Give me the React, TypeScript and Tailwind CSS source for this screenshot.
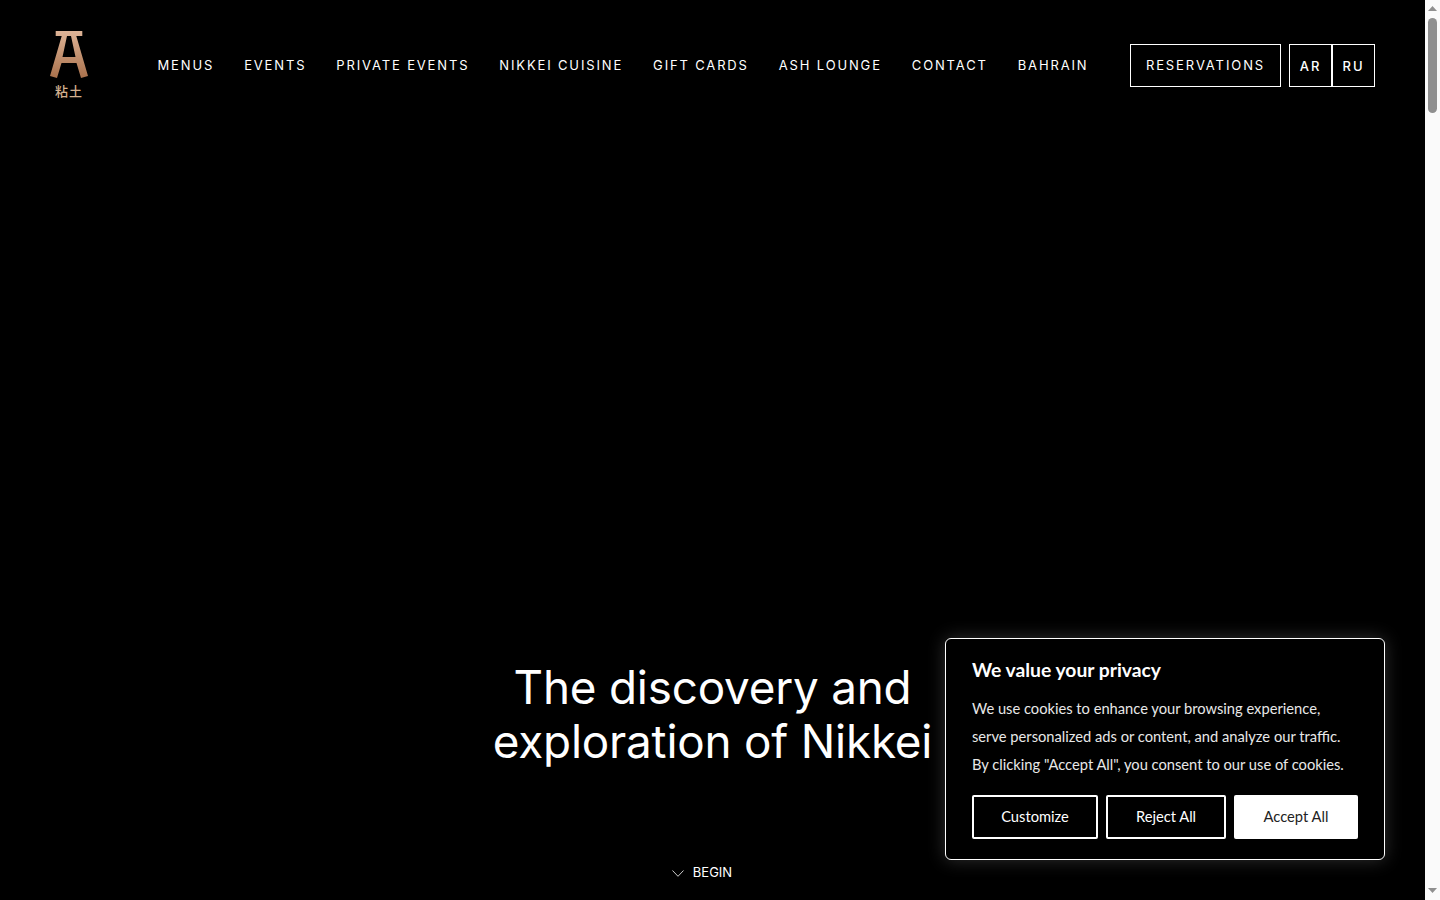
const navItems = [
  "MENUS",
  "EVENTS",
  "PRIVATE EVENTS",
  "NIKKEI CUISINE",
  "GIFT CARDS",
  "ASH LOUNGE",
  "CONTACT",
  "BAHRAIN",
];

const sans = "font-['Inter','Liberation_Sans',sans-serif]";
const body = "font-['Lato','Liberation_Sans',sans-serif]";

function Logo() {
  return (
    <div className="flex w-[38px] flex-col items-center">
      <svg width="38" height="48" viewBox="0 0 38 48" aria-hidden>
        <defs>
          <linearGradient id="clay" x1="0" y1="0" x2="0" y2="1">
            <stop offset="0" stopColor="#deb497" />
            <stop offset="1" stopColor="#a9714c" />
          </linearGradient>
        </defs>
        <path
          fill="url(#clay)"
          fillRule="evenodd"
          d="M5.700 0H32.300V5H26.300L38 45L31 47L26.500 32H11.500L7 47L0 45L11.700 5H5.700ZM17 5L12.500 26H25.500L21 5Z"
        />
      </svg>
      <span className="mt-1 whitespace-nowrap font-['Noto_Sans_CJK_JP',sans-serif] text-[13px] font-medium leading-[16px] tracking-[1px] text-[#d3b08f]">
        粘土
      </span>
    </div>
  );
}

function Header() {
  return (
    <header className={`flex h-[130px] items-start pl-[50px] pr-[50px] pt-[31px] text-white ${sans}`}>
      <Logo />
      <nav className="ml-[69.500px] mt-[13px] flex h-[43px] items-center gap-[30px] text-[13px] tracking-[1.850px]">
        {navItems.map((item) => (
          <a key={item} className="whitespace-nowrap">
            {item}
          </a>
        ))}
      </nav>
      <div className="ml-auto mt-[13px] flex">
        <a className="mr-2 flex h-[43px] w-[151px] items-center justify-center border border-white text-[13px] tracking-[1.9px]">
          RESERVATIONS
        </a>
        <a className="flex h-[43px] w-[43px] items-center justify-center border border-white pt-0.5 text-[13px] font-medium tracking-[1.9px]">
          AR
        </a>
        <a className="flex h-[43px] w-[43px] items-center justify-center border border-white pt-0.5 text-[13px] font-medium tracking-[1.9px]">
          RU
        </a>
      </div>
    </header>
  );
}

function CookieBanner() {
  return (
    <div className={`absolute bottom-10 right-10 h-[222px] w-[440px] rounded-[6px] border border-white bg-black px-[26px] pt-5 text-white shadow-[0_0_18px_rgba(255,255,255,0.19)] ${body}`}>
      <h2 className="text-[19.300px] font-bold leading-[22px]">We value your privacy</h2>
      <p className="mt-[13px] text-[14.700px] leading-[28px] text-[#e8e8e8]">
        We use cookies to enhance your browsing experience,
        <br />
        serve personalized ads or content, and analyze our traffic.
        <br />
        By clicking "Accept All", you consent to our use of cookies.
      </p>
      <div className="mt-[17px] flex gap-2 text-[14.700px]">
        <button type="button" className="h-11 w-[126px] rounded-[2px] border-2 border-white pb-0.5">
          Customize
        </button>
        <button type="button" className="h-11 w-[120px] rounded-[2px] border-2 border-white pb-0.5">
          Reject All
        </button>
        <button type="button" className="h-11 w-[124px] rounded-[2px] bg-white pb-0.5 text-[#222]">
          Accept All
        </button>
      </div>
    </div>
  );
}

function Scrollbar() {
  return (
    <aside className="flex w-[15px] shrink-0 flex-col items-center bg-[#fafafa]">
      <svg className="mt-[6px]" width="9" height="5" viewBox="0 0 9 5" aria-hidden>
        <path d="M4.500 0L9 5H0Z" fill="#8f8f8f" />
      </svg>
      <div className="mt-[7px] h-[95px] w-[9px] rounded-full bg-[#8f8f8f]" />
      <svg className="mb-[7px] mt-auto" width="9" height="5" viewBox="0 0 9 5" aria-hidden>
        <path d="M0 0H9L4.500 5Z" fill="#8f8f8f" />
      </svg>
    </aside>
  );
}

export default function App() {
  return (
    <div className="flex h-[900px] w-[1440px] overflow-hidden bg-black">
      <main className="relative flex min-w-0 flex-1 flex-col">
        <Header />
        <div className="flex flex-1 flex-col items-center justify-end pb-[18px] text-white">
          <h1 className={`text-center text-[45.800px] font-normal leading-[54px] tracking-[-0.2px] ${sans}`}>
            The discovery and
            <br />
            exploration of Nikkei
          </h1>
          <a className={`ml-[-21px] mt-[95px] flex h-[18px] items-center gap-[9px] text-[13px] ${sans}`}>
            <svg width="12" height="7" viewBox="0 0 12 7" fill="none" stroke="#ffffff" strokeWidth="0.8" aria-hidden>
              <path d="M0.500 0.500L6 6.300L11.500 0.500" />
            </svg>
            BEGIN
          </a>
        </div>
        <CookieBanner />
      </main>
      <Scrollbar />
    </div>
  );
}
